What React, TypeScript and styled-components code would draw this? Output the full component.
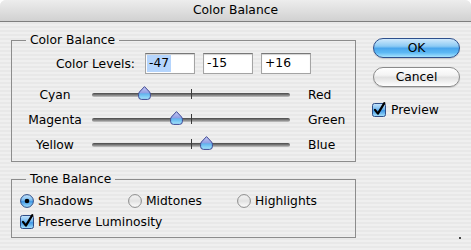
import React, { useId } from "react";
import styled, { createGlobalStyle } from "styled-components";

const Global = createGlobalStyle`
  html, body { margin: 0; padding: 0; background: #ffffff; }
  body {
    font-family: "DejaVu Sans", "Liberation Sans", sans-serif;
    font-size: 12.3px;
    color: #000;
  }
`;

const Window = styled.div`
  width: 471px;
  height: 250px;
  overflow: hidden;
  border-radius: 6px 6px 0 0;
  background: repeating-linear-gradient(to bottom, #efefef 0 2px, #e8e8e8 2px 4px);
  display: flex;
  flex-direction: column;
`;

const TitleBar = styled.div`
  height: 21px;
  flex: none;
  border-bottom: 1px solid #7e7e7e;
  background: linear-gradient(to bottom, #ededed, #d1d1d1);
  display: flex;
  align-items: center;
  justify-content: center;
  line-height: 21px;
`;

const Body = styled.div`
  display: flex;
  flex: 1;
`;

const LeftColumn = styled.div`
  display: flex;
  flex-direction: column;
  margin-left: 11px;
  width: 345px;
`;

const Group = styled.fieldset<{ $top: number }>`
  margin: ${(p) => p.$top}px 0 0 0;
  padding: 0;
  border: 1px solid #8c8c8c;
  min-width: 0;
`;

const Legend = styled.legend`
  margin-left: 14px;
  padding: 0 4px;
  line-height: 16px;
`;

const LevelsRow = styled.div`
  display: flex;
  align-items: center;
  margin-top: 5px;
  height: 21px;
`;

const LevelsLabel = styled.div`
  width: 123px;
  text-align: right;
  margin-right: 10px;
`;

const Inputs = styled.div`
  display: flex;
  gap: 8px;
`;

const LevelInput = styled.div`
  width: 50px;
  height: 21px;
  box-sizing: border-box;
  background: #fff;
  border: 1px solid #a4a4a4;
  border-top-color: #777;
  box-shadow: inset 0 1px 1px rgba(0, 0, 0, 0.18);
  padding: 1px 1px;
  display: flex;
  align-items: center;
`;

const InputText = styled.span<{ $selected?: boolean }>`
  padding: 0 2px;
  line-height: 17px;
  background: ${(p) => (p.$selected ? "#b5d5fd" : "transparent")};
`;

const Sliders = styled.div`
  margin-top: 8px;
  padding-bottom: 4px;
`;

const SliderRow = styled.div`
  display: flex;
  align-items: center;
  height: 25px;
`;

const SideLabel = styled.div`
  width: 74px;
  padding-left: 6px;
  text-align: center;
`;

const Track = styled.div`
  position: relative;
  width: 198px;
  height: 4px;
  border-radius: 2px;
  background: linear-gradient(to bottom, #474747, #858585 55%, #c6c6c6);
  margin-right: 18px;
`;

const Tick = styled.div`
  position: absolute;
  left: 99px;
  top: -4px;
  width: 1px;
  height: 10px;
  background: #3a3a3a;
`;

const Thumb = styled.svg`
  position: absolute;
  top: -7px;
`;

const RightLabel = styled.div``;

const ToneGroupBody = styled.div`
  padding: 3px 0 5px 8px;
`;

const RadioRow = styled.div`
  display: grid;
  grid-template-columns: 108px 109px auto;
  height: 21px;
  align-items: center;
`;

const Option = styled.label`
  display: flex;
  align-items: center;
  gap: 4px;
  height: 21px;
`;

const RightColumn = styled.div`
  display: flex;
  flex-direction: column;
  margin-left: 16px;
  width: 89px;
`;

const PillButton = styled.div<{ $default?: boolean }>`
  margin-left: 1px;
  width: 87px;
  height: 20px;
  box-sizing: border-box;
  border-radius: 10px;
  border: 1px solid ${(p) => (p.$default ? "#2e4f8c" : "#8a8a8a")};
  background: ${(p) =>
    p.$default
      ? "linear-gradient(to bottom, #cfe9fc 0%, #8ccaf4 40%, #4aa6ec 52%, #5cb8f4 75%, #a6e2fd 100%)"
      : "linear-gradient(to bottom, #ffffff 0%, #f3f3f3 40%, #e1e1e1 52%, #efefef 75%, #ffffff 100%)"};
  box-shadow: 0 1px 1px rgba(0, 0, 0, 0.15);
  display: flex;
  align-items: center;
  justify-content: center;
  line-height: 18px;
`;

const OkButton = styled(PillButton)`
  margin-top: 16px;
`;

const CancelButton = styled(PillButton)`
  margin-top: 9px;
`;

const PreviewOption = styled(Option)`
  margin-top: 12px;
  gap: 5px;
`;

const Grip = styled.div`
  margin-top: auto;
  margin-bottom: 11px;
  align-self: flex-end;
  width: 2px;
  height: 2px;
  border-radius: 1px;
  background: #111;
`;

function Checkbox() {
  const id = useId();
  return (
    <svg width="14" height="15" viewBox="0 0 14 15" style={{ marginTop: -1 }}>
      <defs>
        <linearGradient id={id} x1="0" y1="0" x2="0" y2="1">
          <stop offset="0" stopColor="#c9e6fc" />
          <stop offset="0.45" stopColor="#74b9f0" />
          <stop offset="0.55" stopColor="#3f98e6" />
          <stop offset="1" stopColor="#a9e3fc" />
        </linearGradient>
      </defs>
      <rect x="0.5" y="1.5" width="13" height="13" rx="2" fill={`url(#${id})`} stroke="#2f4d86" />
      <path
        d="M3 7.8 L5.9 11.6 L12.3 1.2"
        fill="none"
        stroke="#000"
        strokeWidth="2.2"
        strokeLinecap="round"
        strokeLinejoin="round"
      />
    </svg>
  );
}

function Radio({ on }: { on?: boolean }) {
  const id = useId();
  return (
    <svg width="14" height="14" viewBox="0 0 14 14">
      <defs>
        <linearGradient id={id} x1="0" y1="0" x2="0" y2="1">
          {on ? (
            <>
              <stop offset="0" stopColor="#c9e6fc" />
              <stop offset="0.45" stopColor="#74b9f0" />
              <stop offset="0.55" stopColor="#3f98e6" />
              <stop offset="1" stopColor="#a9e3fc" />
            </>
          ) : (
            <>
              <stop offset="0" stopColor="#f4f4f4" />
              <stop offset="0.5" stopColor="#e2e2e2" />
              <stop offset="1" stopColor="#ffffff" />
            </>
          )}
        </linearGradient>
      </defs>
      <circle cx="7" cy="7" r="6.4" fill={`url(#${id})`} stroke={on ? "#2f4d86" : "#8a8a8a"} />
      {on && <circle cx="7" cy="7" r="2.3" fill="#000" />}
    </svg>
  );
}

function SliderThumb({ left }: { left: number }) {
  const id = useId();
  return (
    <Thumb width="13" height="14" viewBox="0 0 13 14" style={{ left }}>
      <defs>
        <linearGradient id={id} x1="0" y1="0" x2="0" y2="1">
          <stop offset="0" stopColor="#c6c8f2" />
          <stop offset="0.5" stopColor="#8f9ee4" />
          <stop offset="0.56" stopColor="#5fb4ee" />
          <stop offset="1" stopColor="#a8e6fc" />
        </linearGradient>
      </defs>
      <path
        d="M6.5 0.6 L11.6 6 Q12.4 7 12.4 8.5 L12.4 10.5 Q12.4 13.4 9.5 13.4 L3.5 13.4 Q0.6 13.4 0.6 10.5 L0.6 8.5 Q0.6 7 1.4 6 Z"
        fill={`url(#${id})`}
        stroke="#3d4793"
        strokeWidth="1"
      />
    </Thumb>
  );
}

const sliders = [
  { left: "Cyan", right: "Red", value: -47 },
  { left: "Magenta", right: "Green", value: -15 },
  { left: "Yellow", right: "Blue", value: 16 },
];

const TRACK_W = 198;

export default function App() {
  return (
    <>
      <Global />
      <Window>
        <TitleBar>Color Balance</TitleBar>
        <Body>
          <LeftColumn>
            <Group $top={10}>
              <Legend>Color Balance</Legend>
              <LevelsRow>
                <LevelsLabel>Color Levels:</LevelsLabel>
                <Inputs>
                  <LevelInput>
                    <InputText $selected>-47</InputText>
                  </LevelInput>
                  <LevelInput>
                    <InputText>-15</InputText>
                  </LevelInput>
                  <LevelInput>
                    <InputText>+16</InputText>
                  </LevelInput>
                </Inputs>
              </LevelsRow>
              <Sliders>
                {sliders.map((s) => (
                  <SliderRow key={s.left}>
                    <SideLabel>{s.left}</SideLabel>
                    <Track>
                      <Tick />
                      <SliderThumb left={((s.value + 100) / 200) * TRACK_W - 6.5} />
                    </Track>
                    <RightLabel>{s.right}</RightLabel>
                  </SliderRow>
                ))}
              </Sliders>
            </Group>
            <Group $top={9}>
              <Legend>Tone Balance</Legend>
              <ToneGroupBody>
                <RadioRow>
                  <Option>
                    <Radio on />
                    Shadows
                  </Option>
                  <Option>
                    <Radio />
                    Midtones
                  </Option>
                  <Option>
                    <Radio />
                    Highlights
                  </Option>
                </RadioRow>
                <Option>
                  <Checkbox />
                  Preserve Luminosity
                </Option>
              </ToneGroupBody>
            </Group>
          </LeftColumn>
          <RightColumn>
            <OkButton $default>OK</OkButton>
            <CancelButton>Cancel</CancelButton>
            <PreviewOption>
              <Checkbox />
              Preview
            </PreviewOption>
            <Grip />
          </RightColumn>
        </Body>
      </Window>
    </>
  );
}
